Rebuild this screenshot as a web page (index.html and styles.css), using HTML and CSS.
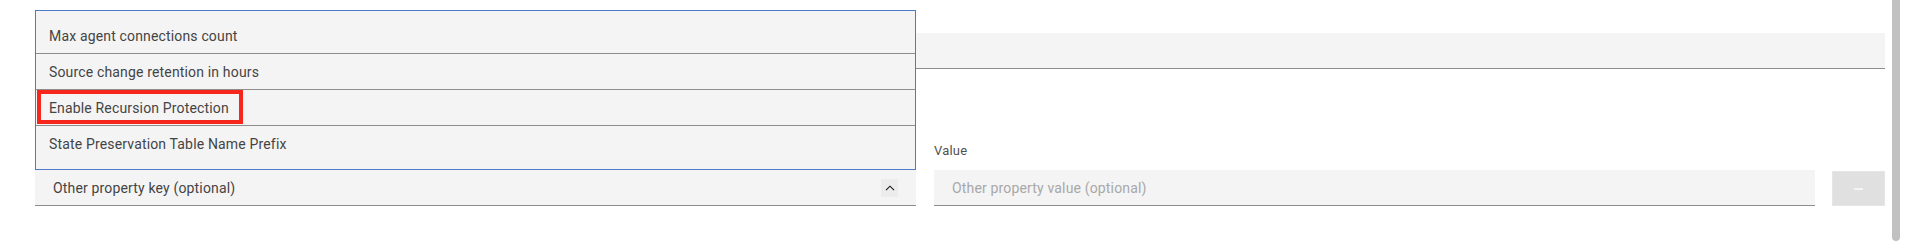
FILE: index.html
```html
<!DOCTYPE html>
<html lang="en">
<head>
<meta charset="utf-8">
<title>Other properties</title>
<link rel="stylesheet" href="styles.css">
</head>
<body>
<div class="page">
  <div class="field-top"></div>
  <div class="row">
    <div class="col col-key">
      <div class="combobox">
        <span class="combo-value">Other property key (optional)</span>
        <span class="chevron-btn">
          <svg width="10" height="6" viewBox="0 0 10 6"><path d="M1 5.2 L5 1.2 L9 5.2" fill="none" stroke="#161616" stroke-width="1.1"/></svg>
        </span>
      </div>
      <ul class="menu">
        <li class="menu-item">Max agent connections count</li>
        <li class="menu-item">Source change retention in hours</li>
        <li class="menu-item">Enable Recursion Protection</li>
        <li class="menu-item">State Preservation Table Name Prefix</li>
        <li class="highlight"></li>
      </ul>
    </div>
    <div class="col col-value">
      <label class="label">Value</label>
      <div class="text-input">Other property value (optional)</div>
    </div>
    <div class="remove-btn"><span class="minus"></span></div>
  </div>
</div>
<div class="scrollbar"></div>
</body>
</html>
```

FILE: styles.css
```css
* { box-sizing: border-box; }
html, body {
  margin: 0;
  padding: 0;
  background: #ffffff;
  overflow: hidden;
}
body {
  font-family: Roboto, "Liberation Sans", sans-serif;
  font-size: 14px;
  color: #444444;
  position: relative;
  width: 1920px;
  height: 242px;
}
.page {
  padding-left: 35px;
  width: 1885px;
}
.field-top {
  margin-top: 33px;
  height: 36px;
  background: #f4f4f4;
  border-bottom: 1px solid #8d8d8d;
}
.row {
  display: flex;
  align-items: flex-end;
  margin-top: 74px;
}
.col-key {
  position: relative;
  width: 881px;
}
.col-value {
  width: 881px;
  margin-left: 18px;
  display: flex;
  flex-direction: column;
}
.combobox {
  height: 36px;
  background: #f4f4f4;
  border-bottom: 1px solid #8d8d8d;
  display: flex;
  align-items: center;
  padding-left: 18px;
  padding-right: 18px;
}
.combo-value {
  flex: 1;
  color: #444444;
  letter-spacing: 0.16px;
  padding-top: 1px;
}
.chevron-btn {
  width: 17px;
  height: 18px;
  background: #ececec;
  display: flex;
  align-items: center;
  justify-content: center;
  margin-top: 1px;
}
.menu {
  position: absolute;
  left: 0;
  bottom: 100%;
  width: 881px;
  margin: 0;
  padding: 7px 0 7px;
  list-style: none;
  background: #f4f4f4;
  border: 1px solid #5079c6;
}
.menu-item {
  height: 36px;
  display: flex;
  align-items: center;
  padding-left: 13px;
  color: #444444;
  letter-spacing: 0.16px;
  border-bottom: 1px solid #8d8d8d;
}
.menu-item:nth-child(4) {
  border-bottom: none;
}
.highlight {
  position: absolute;
  left: 1px;
  top: 79px;
  width: 206px;
  height: 34px;
  border: 4px solid #f6261c;
}
.label {
  font-size: 13px;
  line-height: 16px;
  color: #525252;
  letter-spacing: 0.2px;
  margin-bottom: 11px;
}
.text-input {
  height: 36px;
  background: #f4f4f4;
  border-bottom: 1px solid #8d8d8d;
  display: flex;
  align-items: center;
  padding-left: 18px;
  color: #a8a8a8;
  letter-spacing: 0.16px;
}
.remove-btn {
  width: 53px;
  height: 35px;
  margin-left: 17px;
  background: #e0e0e0;
  border: 1px solid #e6e6e6;
  display: flex;
  align-items: center;
  justify-content: center;
}
.minus {
  width: 9px;
  height: 2px;
  background: #f4f4f4;
}
.scrollbar {
  position: absolute;
  left: 1892px;
  top: -10px;
  width: 8px;
  height: 251px;
  background: #c1c1c1;
  border-radius: 4px;
}
```
